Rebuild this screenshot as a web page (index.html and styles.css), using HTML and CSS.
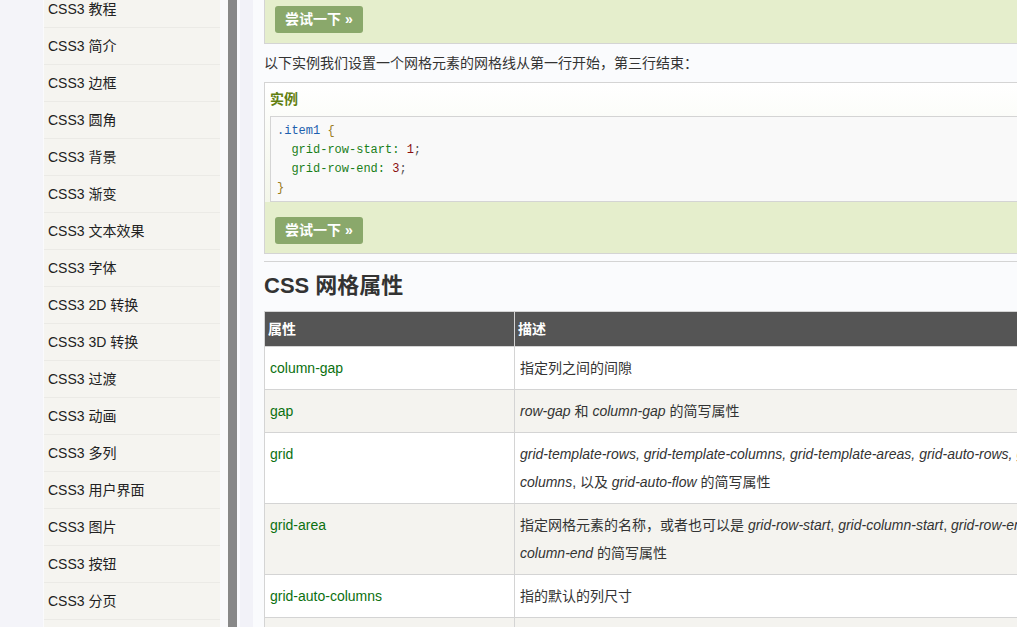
FILE: index.html
```html
<!DOCTYPE html>
<html lang="zh">
<head>
<meta charset="utf-8">
<title>CSS 网格属性</title>
<link rel="stylesheet" href="styles.css">
</head>
<body>
<div class="page">
  <div class="gutter"></div>
  <div class="side-wrap">
    <ul class="sidebar">
      <li>CSS3 教程</li>
      <li>CSS3 简介</li>
      <li>CSS3 边框</li>
      <li>CSS3 圆角</li>
      <li>CSS3 背景</li>
      <li>CSS3 渐变</li>
      <li>CSS3 文本效果</li>
      <li>CSS3 字体</li>
      <li>CSS3 2D 转换</li>
      <li>CSS3 3D 转换</li>
      <li>CSS3 过渡</li>
      <li>CSS3 动画</li>
      <li>CSS3 多列</li>
      <li>CSS3 用户界面</li>
      <li>CSS3 图片</li>
      <li>CSS3 按钮</li>
      <li>CSS3 分页</li>
      <li>CSS3 框大小</li>
    </ul>
    <div class="side-gap"></div>
    <div class="scroll-bar"></div>
    <div class="side-gap2"></div>
  </div>
  <div class="lav"></div>
  <main class="main">
    <div class="example top-example">
      <div class="btn-area first"><span class="try-btn">尝试一下 »</span></div>
    </div>
    <p class="para">以下实例我们设置一个网格元素的网格线从第一行开始，第三行结束：</p>
    <div class="example">
      <div class="ex-top">
        <h2 class="ex-head">实例</h2>
        <pre class="code"><span class="sel">.item1</span> <span class="brace">{</span>
  <span class="prop">grid-row-start:</span> <span class="num">1</span><span class="pun">;</span>
  <span class="prop">grid-row-end:</span> <span class="num">3</span><span class="pun">;</span>
<span class="brace">}</span></pre>
      </div>
      <div class="btn-area"><span class="try-btn">尝试一下 »</span></div>
    </div>
    <hr class="sep">
    <h2 class="title">CSS 网格属性</h2>
    <table class="props">
      <thead>
        <tr><th class="c1">属性</th><th>描述</th></tr>
      </thead>
      <tbody>
        <tr><td class="c1"><span class="lnk">column-gap</span></td><td>指定列之间的间隙</td></tr>
        <tr><td class="c1"><span class="lnk">gap</span></td><td><em>row-gap</em> 和 <em>column-gap</em> 的简写属性</td></tr>
        <tr><td class="c1"><span class="lnk">grid</span></td><td><em>grid-template-rows, grid-template-columns, grid-template-areas, grid-auto-rows, grid-auto-columns</em>, 以及 <em>grid-auto-flow</em> 的简写属性</td></tr>
        <tr><td class="c1"><span class="lnk">grid-area</span></td><td>指定网格元素的名称，或者也可以是 <em>grid-row-start</em>, <em>grid-column-start</em>, <em>grid-row-end</em>, 和 <em>grid-column-end</em> 的简写属性</td></tr>
        <tr><td class="c1"><span class="lnk">grid-auto-columns</span></td><td>指的默认的列尺寸</td></tr>
        <tr><td class="c1"><span class="lnk">grid-auto-flow</span></td><td>指定自动布局算法怎样运作，精确指定在网格中被自动布局的元素怎样排列。</td></tr>
      </tbody>
    </table>
  </main>
</div>
</body>
</html>
```
FILE: styles.css
```css
html, body {
  margin: 0;
  padding: 0;
  overflow: hidden;
}
body {
  background: #f6f6fb;
  font-family: "Liberation Sans", Arial, "Noto Sans CJK SC", sans-serif;
  font-size: 14px;
  color: #333;
}
.page {
  display: flex;
  height: 627px;
  overflow: hidden;
}
.gutter {
  width: 43px;
  flex: none;
  background: #f4f4f9;
}
.side-wrap {
  flex: none;
  display: flex;
  background: #fafafc;
  padding-left: 1px;
}
.sidebar {
  list-style: none;
  margin: -9px 0 0 0;
  padding: 0;
  width: 176px;
  background: #f5f4f0;
}
.sidebar li {
  height: 36px;
  line-height: 36px;
  padding-left: 4px;
  border-bottom: 1px solid #ebeae6;
  color: #222;
  white-space: nowrap;
}
.side-gap {
  width: 8px;
  background: #f9f9fb;
}
.scroll-bar {
  width: 9px;
  background: #888;
}
.side-gap2 {
  width: 3px;
  background: #fafafd;
}
.lav {
  width: 13px;
  flex: none;
  background: #f2f2f8;
}
.main {
  flex: 1;
  min-width: 0;
  background: #fafbfd;
  padding-left: 11px;
}
.example {
  width: 900px;
  background: #e5eecc;
  border: 1px solid #d4d4d4;
}
.top-example {
  border-top: none;
}
.btn-area {
  padding: 15px 0 9px 10px;
}
.btn-area.first {
  padding-top: 6px;
  padding-bottom: 10px;
}
.try-btn {
  display: inline-block;
  background: #8aa86b;
  color: #fff;
  font-weight: bold;
  line-height: 27px;
  padding: 0 10px;
  border-radius: 3px;
}
.para {
  margin: 0;
  padding: 9px 0;
  line-height: 20px;
}
.ex-top {
  background: linear-gradient(to bottom, #ffffff, #f3f6e9);
  padding-left: 5px;
}
.ex-head {
  margin: 0;
  padding-left: 0;
  font-size: 14px;
  line-height: 33px;
  color: #617f10;
  font-weight: bold;
}
.code {
  margin: 0;
  background: #f9f9f9;
  border: 1px solid #d4d4d4;
  padding: 5px 6px 3px;
  font-family: "Liberation Mono", "DejaVu Sans Mono", monospace;
  font-size: 12px;
  line-height: 19px;
  color: #333;
}
.sel { color: #1d5fae; }
.brace { color: #9a7d1c; }
.prop { color: #1a7f1a; }
.num { color: #8a0e0e; }
.pun { color: #555; }
.sep {
  margin: 7px 0 0 0;
  border: none;
  border-top: 1px solid #d4d4d4;
  height: 0;
  width: 900px;
}
.title {
  margin: 7px 0 8px;
  font-size: 22px;
  line-height: 34px;
  color: #333;
  font-weight: bold;
}
.props {
  border-collapse: collapse;
  width: 850px;
}
.props th, .props td {
  border: 1px solid #d4d4d4;
  text-align: left;
  vertical-align: top;
}
.props th {
  background: #555;
  color: #fff;
  font-weight: bold;
  line-height: 20px;
  padding: 7px 3px;
}
.props td {
  line-height: 28px;
  padding: 7px 5px;
  color: #333;
}
.props .c1 {
  width: 239px;
}
.props tbody tr:nth-child(even) td {
  background: #f4f3ef;
}
.props tbody tr:nth-child(odd) td {
  background: #fff;
}
.lnk {
  color: #0b700f;
}
```
